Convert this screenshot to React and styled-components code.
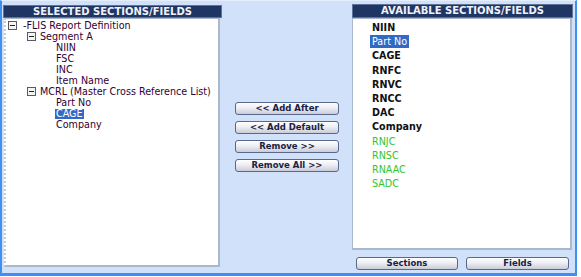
import React from "react"
import styled, { createGlobalStyle } from "styled-components"

const Global = createGlobalStyle`
  body {
    margin: 0;
    background: #ffffff;
    font-family: "DejaVu Sans", Verdana, sans-serif;
  }
`

const Frame = styled.div`
  box-sizing: border-box;
  width: 577px;
  height: 276px;
  background: #d0e1f9;
  border: 2px solid #3d8ff2;
  border-top: 1px solid #e4eefc;
  border-bottom-width: 3px;
  padding: 3px 2px 0 1px;
  display: flex;
`

const Column = styled.div`
  display: flex;
  flex-direction: column;
  width: ${p => p.w}px;
`

const Header = styled.div`
  box-sizing: border-box;
  height: ${p => p.h || 13}px;
  margin-top: ${p => p.top || 0}px;
  background: #1f3564;
  border: 1px solid #5d7398;
  color: #eef2fa;
  font-size: 10px;
  font-weight: bold;
  line-height: 11px;
  text-align: center;
  white-space: nowrap;
`

const ListBox = styled.div`
  box-sizing: border-box;
  margin-left: ${p => p.left || 0}px;
  width: ${p => p.w}px;
  height: ${p => p.h}px;
  background: #ffffff;
  border: 1px solid #a9b8cd;
  border-right-width: 2px;
  border-bottom-width: 2px;
  border-left: ${p => (p.dotted ? "2px dotted #c4ccd8" : "1px solid #a9b8cd")};
  padding-top: ${p => p.pt || 0}px;
`

const TreeRow = styled.div`
  display: flex;
  align-items: center;
  height: 11px;
  padding-left: ${p => p.indent}px;
  gap: ${p => p.gap || 0}px;
  font-size: 9.6px;
  color: #330033;
  white-space: nowrap;
`

const MinusBox = styled.span`
  box-sizing: border-box;
  position: relative;
  width: 9px;
  height: 9px;
  flex: none;
  border: 1px solid #555a66;
  background: #f4f4f4;
  &::after {
    content: "";
    position: absolute;
    left: 1px;
    right: 1px;
    top: 3px;
    height: 1px;
    background: #222;
  }
`

const Label = styled.span`
  padding: 0 1px;
  line-height: 10px;
  background: ${p => (p.selected ? "#316ac5" : "transparent")};
  color: ${p => (p.selected ? "#ffffff" : "inherit")};
`

const Middle = styled.div`
  flex: 1;
  display: flex;
  flex-direction: column;
  align-items: center;
  gap: 6px;
  padding-top: 98px;
`

const Button = styled.button`
  box-sizing: border-box;
  width: ${p => p.w || 104}px;
  height: 13px;
  padding: 0;
  border: 1px solid #56698c;
  border-radius: 3px;
  background: linear-gradient(#ffffff 0%, #eeeef4 45%, #c9ccd8 100%);
  color: #1a2140;
  font-family: "DejaVu Sans", Verdana, sans-serif;
  font-size: 8.5px;
  font-weight: bold;
  line-height: 11px;
  white-space: nowrap;
`

const FieldList = styled.div`
  padding: 2px 0 0 17px;
  display: flex;
  flex-direction: column;
  align-items: flex-start;
`

const Field = styled.div`
  line-height: 13px;
  padding: 0 2px;
  font-size: 9.6px;
  font-weight: ${p => (p.kind === "bold" ? "bold" : "normal")};
  color: ${p =>
    p.selected ? "#ffffff" : p.kind === "green" ? "#33c52c" : "#111111"};
  background: ${p => (p.selected ? "#316ac5" : "transparent")};
  height: ${p => (p.selected ? "13px" : "14.2px")};
  margin-bottom: ${p => (p.selected ? "1.2px" : "0")};
`

const ButtonRow = styled.div`
  display: flex;
  gap: 8px;
  padding: 7px 0 0 4px;
`

const tree = [
  { level: 0, text: "-FLIS Report Definition", icon: true },
  { level: 1, text: "Segment A", icon: true },
  { level: 2, text: "NIIN" },
  { level: 2, text: "FSC" },
  { level: 2, text: "INC" },
  { level: 2, text: "Item Name" },
  { level: 1, text: "MCRL (Master Cross Reference List)", icon: true },
  { level: 2, text: "Part No" },
  { level: 2, text: "CAGE", selected: true },
  { level: 2, text: "Company" },
]

const indents = [{ indent: 2, gap: 5 }, { indent: 21, gap: 3 }, { indent: 49, gap: 0 }]

const fields = [
  { text: "NIIN", kind: "bold" },
  { text: "Part No", selected: true },
  { text: "CAGE", kind: "bold" },
  { text: "RNFC", kind: "bold" },
  { text: "RNVC", kind: "bold" },
  { text: "RNCC", kind: "bold" },
  { text: "DAC", kind: "bold" },
  { text: "Company", kind: "bold" },
  { text: "RNJC", kind: "green" },
  { text: "RNSC", kind: "green" },
  { text: "RNAAC", kind: "green" },
  { text: "SADC", kind: "green" },
]

export default function App() {
  return (
    <>
      <Global />
      <Frame>
        <Column w={219}>
          <Header top={1}>SELECTED SECTIONS/FIELDS</Header>
          <ListBox left={1} w={216} h={249} pt={1} dotted>
            {tree.map((t, i) => (
              <TreeRow key={i} indent={indents[t.level].indent} gap={indents[t.level].gap}>
                {t.icon && <MinusBox />}
                <Label selected={t.selected}>{t.text}</Label>
              </TreeRow>
            ))}
          </ListBox>
        </Column>
        <Middle>
          <Button>&lt;&lt; Add After</Button>
          <Button>&lt;&lt; Add Default</Button>
          <Button>Remove &gt;&gt;</Button>
          <Button>Remove All &gt;&gt;</Button>
        </Middle>
        <Column w={221}>
          <Header h={14}>AVAILABLE SECTIONS/FIELDS</Header>
          <ListBox w={220} h={232}>
            <FieldList>
              {fields.map(f => (
                <Field key={f.text} kind={f.kind} selected={f.selected}>
                  {f.text}
                </Field>
              ))}
            </FieldList>
          </ListBox>
          <ButtonRow>
            <Button w={102}>Sections</Button>
            <Button w={103}>Fields</Button>
          </ButtonRow>
        </Column>
      </Frame>
    </>
  )
}
